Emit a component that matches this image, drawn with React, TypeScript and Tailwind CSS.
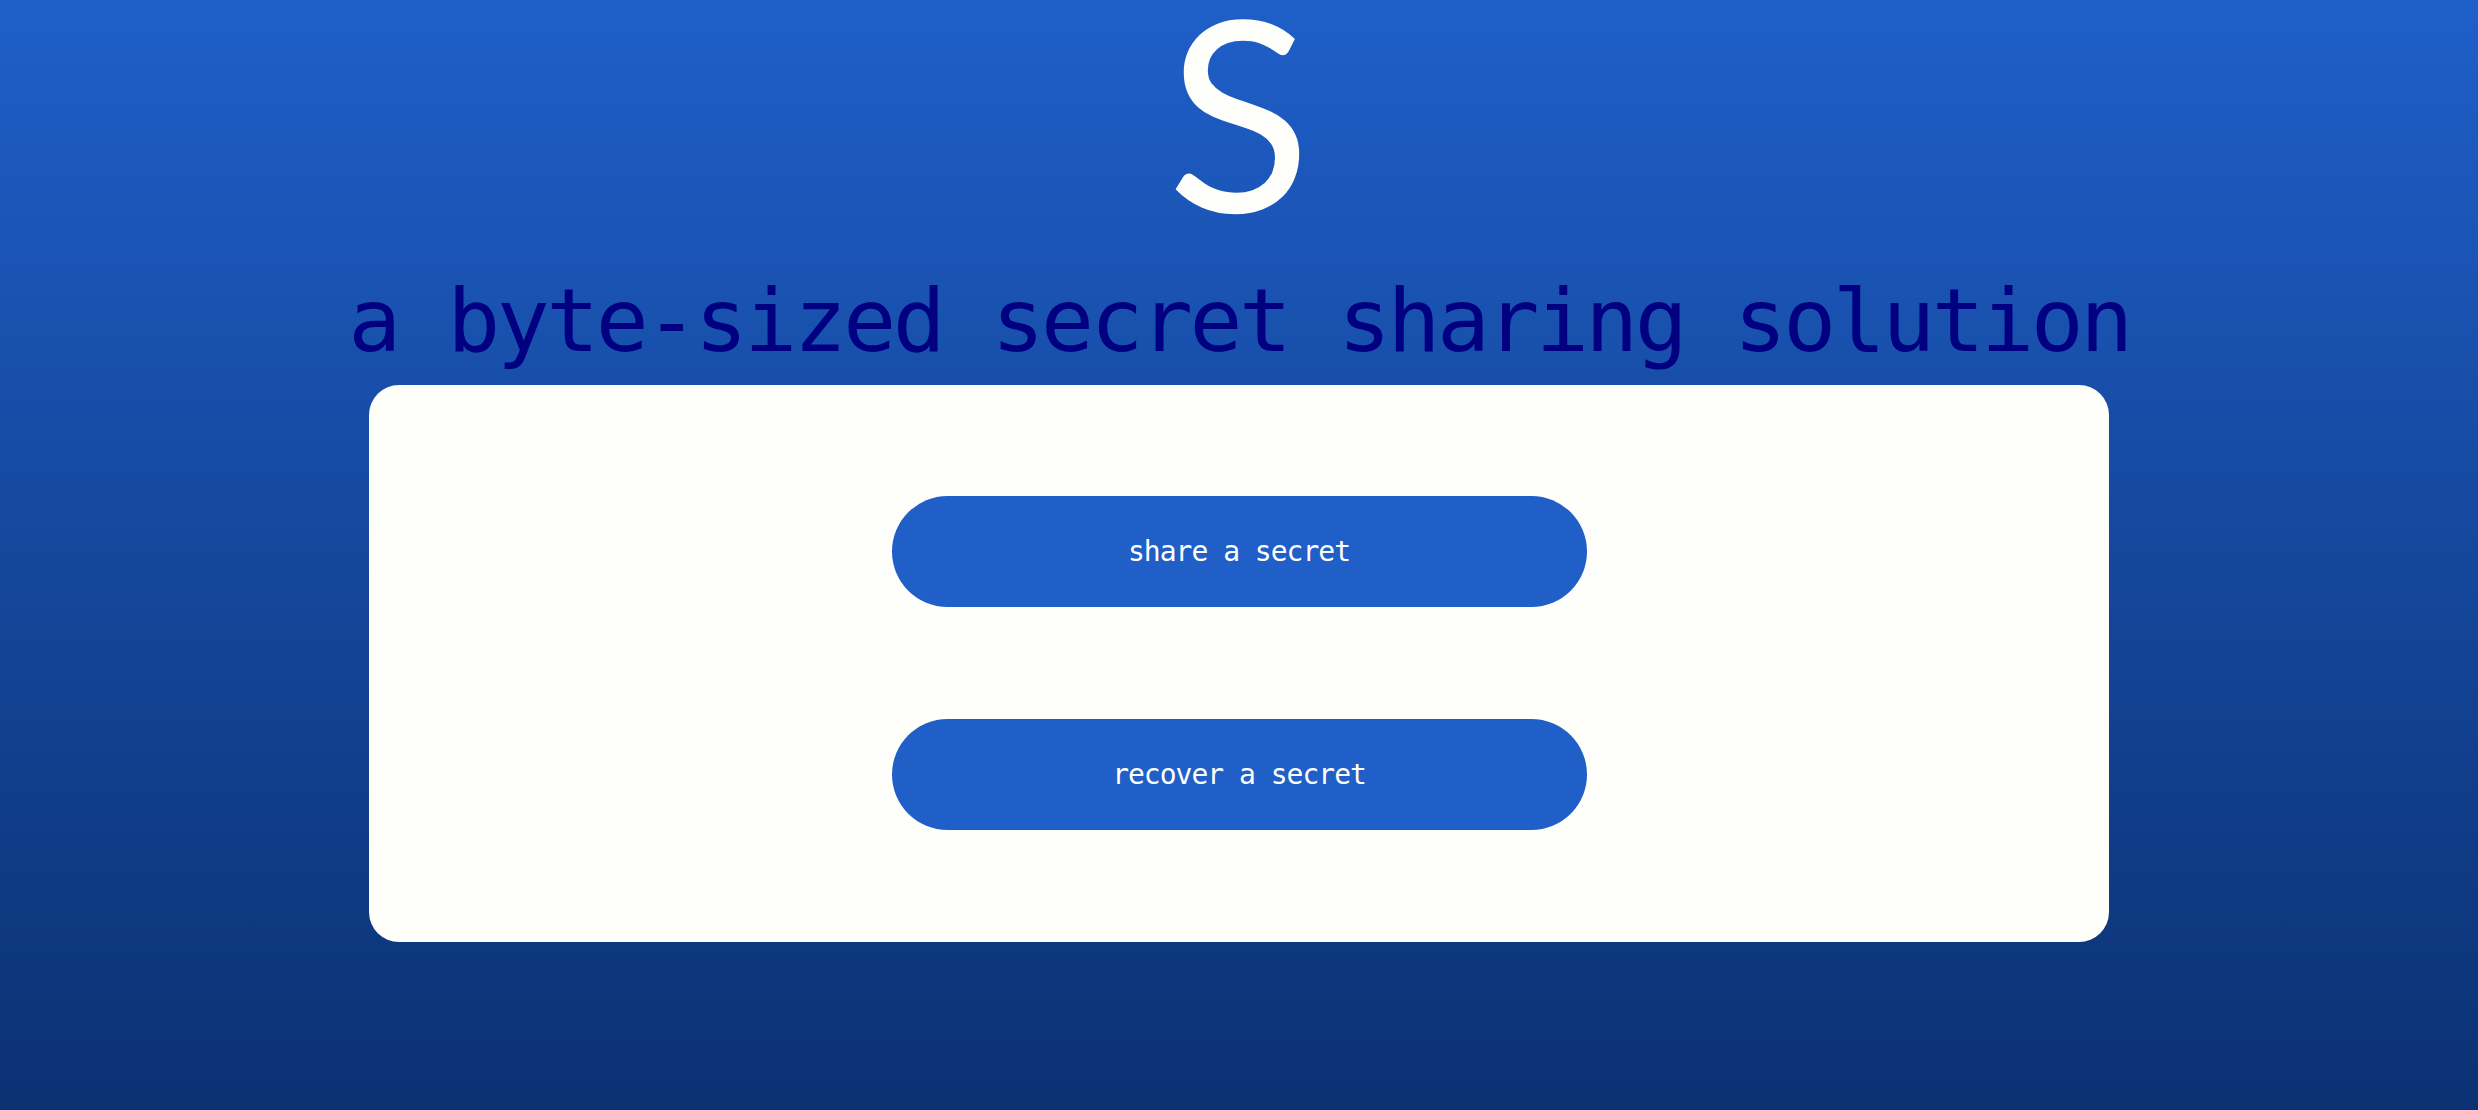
const mono = "font-['DejaVu_Sans_Mono','Liberation_Mono',monospace]";

export default function App() {
  return (
    <div className="min-h-screen w-full overflow-hidden bg-gradient-to-b from-[#1f5fc9] to-[#0b3172] flex flex-col items-center">
      <div className="mt-[3px] text-[266px] leading-[0.8] text-[#fefefa] font-normal font-['Lato','Open_Sans',sans-serif]">
        S
      </div>
      <h1 className={`mt-[61px] text-[88px] leading-none tracking-[-3.5px] text-[#000080] font-normal whitespace-nowrap ${mono}`}>
        a byte-sized secret sharing solution
      </h1>
      <div className="mt-[20px] w-[1740px] h-[557px] rounded-[30px] bg-[#fefefa] flex flex-col items-center justify-center gap-[112px]">
        <button className={`w-[695px] h-[111px] rounded-full bg-[#205fc8] text-[#fefefa] text-[28px] tracking-[-1px] ${mono}`}>
          share a secret
        </button>
        <button className={`w-[695px] h-[111px] rounded-full bg-[#205fc8] text-[#fefefa] text-[28px] tracking-[-1px] ${mono}`}>
          recover a secret
        </button>
      </div>
    </div>
  );
}
